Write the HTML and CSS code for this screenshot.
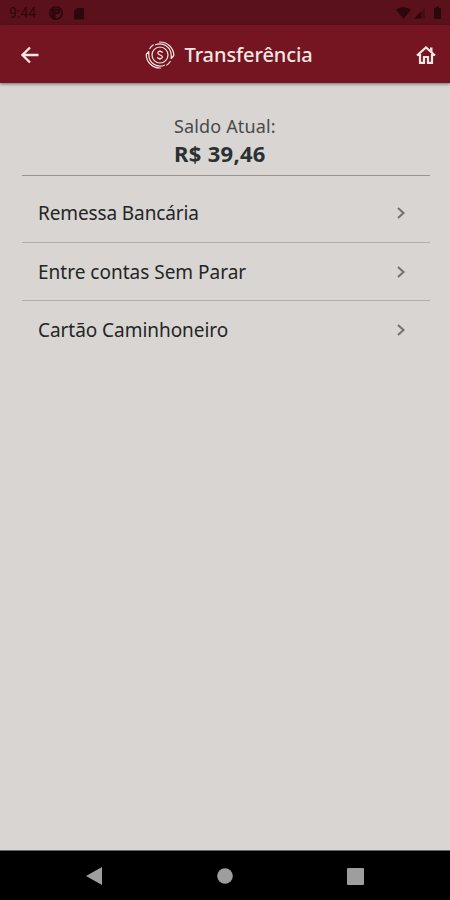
FILE: index.html
```html
<!DOCTYPE html>
<html lang="pt-BR">
<head>
    <meta charset="UTF-8">
    <meta name="viewport" content="width=device-width, initial-scale=1.0">
    <title>Transferência</title>
    <link rel="stylesheet" href="styles.css">
</head>
<body>
    <div id="status">
        <span class="hora">9:44</span>
        <svg class="app" width="14" height="14" viewBox="0 0 14 14">
            <circle cx="7" cy="7" r="6.2" fill="none" stroke="currentColor" stroke-width="1.6"/>
            <path d="M2 2.500H8.500a2.700 2.700 0 0 1 0 5.500H6.500V13H3z" fill="currentColor"/>
            <path d="M6.500 5.300h2" stroke="#5b111b" stroke-width="1.200"/>
        </svg>
        <svg class="cartao" width="12" height="13" viewBox="0 0 12 13">
            <path d="M4 1h7v11.500H1V4z" fill="currentColor"/>
        </svg>
        <svg class="sinais" width="48" height="14" viewBox="0 0 48 14">
            <path d="M0 3.500Q7.500-1.500 15 3.500L7.500 13z" fill="currentColor"/>
            <path d="M18 12.500L29 1.500V12.500z" fill="currentColor" opacity=".4"/>
            <path d="M18 12.500L25 5.500V12.500z" fill="currentColor"/>
            <path d="M38 2h2V.5h3V2h2v11h-7z" fill="currentColor"/>
        </svg>
    </div>

    <header>
        <a class="voltar">
            <svg width="18" height="18" viewBox="0 0 18 18">
                <path d="M17.500 9H2M9 1.500L1.500 9L9 16.500" fill="none" stroke="currentColor" stroke-width="2.300"/>
            </svg>
        </a>
        <div id="titulo">
            <svg width="30" height="28" viewBox="0 0 30 28" fill="none" stroke="currentColor" stroke-width="1.200" stroke-linecap="round" stroke-linejoin="round">
                <circle cx="15" cy="14" r="8"/>
                <path d="M10.500 3.800A11.300 11.300 0 0 1 26.200 14V17.500L28.800 14.500A13.600 13.600 0 0 0 14.500 1"/>
                <path d="M19.500 24.200A11.300 11.300 0 0 1 3.800 14V10.500L1.200 13.500A13.600 13.600 0 0 0 15.500 27"/>
                <path d="M4.800 7.500Q6.200 5.200 8.200 4M25.200 20.500Q23.800 22.800 21.800 24"/>
                <path d="M17.300 11.500C16.800 10 12.800 10 12.800 12C12.800 14.500 17.400 13.500 17.400 16C17.400 18 13 18 12.600 16.500M15 9.500V10.500M15 17.500V18.500"/>
            </svg>
            <h1>Transferência</h1>
        </div>
        <a class="inicio">
            <svg width="20" height="18" viewBox="0 0 20 18">
                <path d="M1 9.500L10 1.500L19 9.500M4 8V16.800H8V11H12V16.800H16V8" fill="none" stroke="currentColor" stroke-width="2.200"/>
                <path d="M14 1.500h2.500V6L14 4z" fill="currentColor"/>
            </svg>
        </a>
    </header>

    <main>
        <div id="saldo">
            <div>
                <span class="legenda">Saldo Atual:</span>
                <strong class="valor">R$ 39,46</strong>
            </div>
        </div>
        <ul id="opcoes">
            <li>
                <span class="remessa">Remessa Bancária</span>
                <svg width="8" height="12" viewBox="0 0 8 12"><path d="M1 1L6.500 6L1 11"/></svg>
            </li>
            <li>
                <span class="contas">Entre contas Sem Parar</span>
                <svg width="8" height="12" viewBox="0 0 8 12"><path d="M1 1L6.500 6L1 11"/></svg>
            </li>
            <li>
                <span class="caminhoneiro">Cartão Caminhoneiro</span>
                <svg width="8" height="12" viewBox="0 0 8 12"><path d="M1 1L6.500 6L1 11"/></svg>
            </li>
        </ul>
    </main>

    <footer>
        <svg width="16" height="18" viewBox="0 0 16 18"><path d="M0 9L16 0V18z"/></svg>
        <svg width="16" height="16" viewBox="0 0 16 16"><circle cx="8" cy="8" r="7.800"/></svg>
        <svg width="17" height="17" viewBox="0 0 17 17"><rect width="17" height="17" rx="1"/></svg>
    </footer>
</body>
</html>
```
FILE: styles.css
```css
* {
    box-sizing: border-box;
}

body {
    display: flex;
    flex-direction: column;
    height: 900px;
    margin: 0;
    background-color: #d9d5d2;
    font-family: "Noto Sans", sans-serif;
    overflow: hidden;
}

svg {
    display: block;
    flex-shrink: 0;
}

#status {
    display: flex;
    align-items: center;
    height: 25px;
    padding: 1px 6px 0 9px;
    background-color: #5b111b;
    color: #2b080c;
}

.hora {
    width: 40px;
    font-family: Roboto, sans-serif;
    font-size: 14px;
}

.cartao {
    margin-left: 10px;
}

.sinais {
    margin-left: auto;
}

header {
    display: flex;
    align-items: center;
    justify-content: space-between;
    position: relative;
    height: 58px;
    padding: 1px 15px 0 21px;
    background-color: #751522;
    color: #f7e6e2;
    box-shadow: 0 1px 3px rgba(0, 0, 0, .5);
}

.inicio {
    margin-right: -1px;
}

#titulo {
    display: flex;
    align-items: center;
    gap: 10px;
    width: 170px;
    margin-right: -4px;
}

#titulo h1 {
    margin: 1px 0 0;
    font-size: 20px;
    font-weight: 500;
    line-height: 28px;
    letter-spacing: -.1px;
    white-space: nowrap;
}

main {
    flex-grow: 1;
    padding: 0 20px 0 22px;
}

#saldo {
    display: flex;
    height: 93px;
    padding: 30px 0 0 152px;
    border-bottom: 1px solid #979390;
}

.legenda, .valor {
    display: block;
    white-space: nowrap;
}

.legenda {
    color: #484b4d;
    font-size: 18px;
    line-height: 27px;
    letter-spacing: .15px;
}

.valor {
    color: #2b3033;
    font-size: 22px;
    line-height: 26px;
    letter-spacing: .3px;
}

#opcoes {
    list-style: none;
    margin: 0;
    padding: 8px 0 0;
}

#opcoes li {
    display: flex;
    align-items: center;
    justify-content: space-between;
    height: 58px;
    padding: 0 25px 0 16px;
    color: #242526;
    font-size: 19px;
    white-space: nowrap;
}

#opcoes li + li {
    border-top: 1px solid #b2aeab;
}

#opcoes .remessa {
    letter-spacing: -.12px;
}

#opcoes .caminhoneiro {
    letter-spacing: -.05px;
}

#opcoes path {
    fill: none;
    stroke: #73706e;
    stroke-width: 2;
}

footer {
    display: flex;
    align-items: center;
    justify-content: space-between;
    height: 50px;
    padding: 1px 86px 0;
    border-top: 1px solid #666;
    background-color: #000;
    fill: #9e9e9e;
}
```
